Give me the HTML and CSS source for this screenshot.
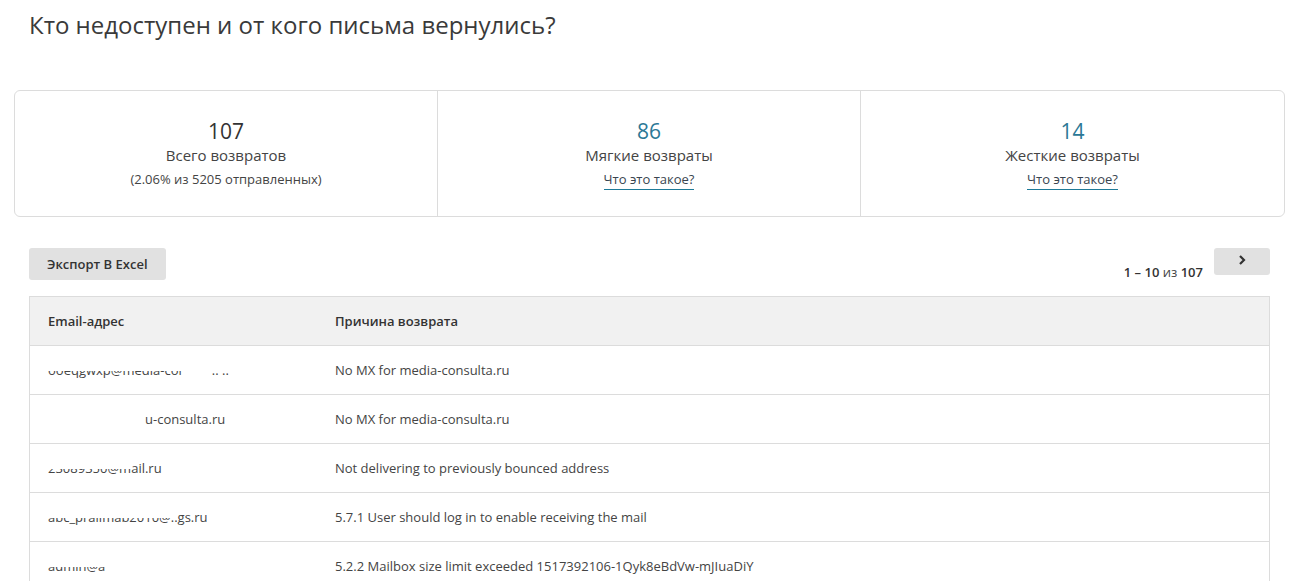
FILE: index.html
```html
<!DOCTYPE html>
<html lang="ru">
<head>
<meta charset="utf-8">
<title>Возвраты</title>
<link rel="stylesheet" href="styles.css">
</head>
<body>
<h1 class="title">Кто недоступен и от кого письма вернулись?</h1>

<div class="stats">
  <div class="stat">
    <div class="stat-num">107</div>
    <div class="stat-label">Всего возвратов</div>
    <div class="stat-sub">(2.06% из 5205 отправленных)</div>
  </div>
  <div class="stat">
    <div class="stat-num teal">86</div>
    <div class="stat-label">Мягкие возвраты</div>
    <div class="stat-sub"><a class="stat-link" href="#">Что это такое?</a></div>
  </div>
  <div class="stat">
    <div class="stat-num teal">14</div>
    <div class="stat-label">Жесткие возвраты</div>
    <div class="stat-sub"><a class="stat-link" href="#">Что это такое?</a></div>
  </div>
</div>

<div class="toolbar">
  <button class="btn">Экспорт В Excel</button>
  <div class="pager">
    <span class="pager-info"><b>1 – 10</b> из <b>107</b></span>
    <button class="btn btn-next"><svg width="10" height="12" viewBox="0 0 10 12"><path d="M3 2 L7 6 L3 10" fill="none" stroke="#333" stroke-width="2.2"/></svg></button>
  </div>
</div>

<table class="tbl">
  <thead>
    <tr><th class="c1">Email-адрес</th><th>Причина возврата</th></tr>
  </thead>
  <tbody>
    <tr><td class="c1"><span class="cut">ooeqgwxp@media-cor</span><span class="gap g1"></span><span class="cut">:: ..</span></td><td>No MX for media-consulta.ru</td></tr>
    <tr><td class="c1"><span class="gap g2"></span><span class="frag">u-consulta.ru</span></td><td>No MX for media-consulta.ru</td></tr>
    <tr><td class="c1"><span class="cut">23089350@m</span>ail.ru</td><td>Not delivering to previously bounced address</td></tr>
    <tr><td class="c1"><span class="cut">abc_prallmab2010@..</span>gs.ru</td><td>5.7.1 User should log in to enable receiving the mail</td></tr>
    <tr><td class="c1"><span class="cut">admin@a</span><span class="gap g3"></span><span class="cut">'</span></td><td>5.2.2 Mailbox size limit exceeded 1517392106-1Qyk8eBdVw-mJIuaDiY</td></tr>
  </tbody>
</table>
</body>
</html>
```

FILE: styles.css
```css
html, body {
  margin: 0;
  padding: 0;
  background: #fff;
}
body {
  font-family: "Open Sans", "Liberation Sans", sans-serif;
  color: #444;
  width: 1297px;
}
.title {
  margin: 0;
  padding: 9px 0 0 29px;
  font-size: 24px;
  line-height: 32px;
  font-weight: 400;
  color: #3a3a3a;
  height: 82px;
  box-sizing: border-box;
}
.stats {
  margin: 8px 12px 0 14px;
  border: 1px solid #dcdcdc;
  border-radius: 6px;
  display: grid;
  grid-template-columns: 422px 423px 1fr;
  height: 127px;
  box-sizing: border-box;
}
.stat {
  text-align: center;
  padding-top: 26px;
  border-left: 1px solid #dcdcdc;
}
.stat:first-child {
  border-left: none;
}
.stat-num {
  font-size: 21px;
  line-height: 28px;
  color: #333;
}
.stat-num.teal {
  color: #2b7896;
}
.stat-label {
  font-size: 15px;
  line-height: 20px;
  color: #444;
  margin-top: 0;
}
.stat-sub {
  font-size: 13px;
  line-height: 20px;
  color: #444;
  margin-top: 4px;
}
.stat-link {
  color: #3a4550;
  text-decoration: none;
  border-bottom: 1px solid #1e7a98;
  padding-bottom: 1px;
}
.toolbar {
  display: flex;
  justify-content: space-between;
  align-items: flex-start;
  margin: 31px 27px 0 29px;
  height: 48px;
}
.btn {
  border: none;
  background: #e1e1e1;
  border-radius: 3px;
  font-family: "Open Sans", "Liberation Sans", sans-serif;
  font-weight: 600;
  font-size: 13px;
  color: #333;
  height: 32px;
  padding: 0 18px;
  cursor: pointer;
}
.pager {
  display: flex;
  align-items: flex-start;
  gap: 11px;
}
.pager-info {
  font-size: 13px;
  color: #444;
  padding-top: 15px;
  line-height: 18px;
}
.pager-info b {
  font-weight: 600;
  color: #333;
}
.btn-next {
  width: 56px;
  height: 27px;
  padding: 0;
  display: flex;
  align-items: center;
  justify-content: center;
  padding-bottom: 4px;
}
.tbl {
  margin: 0 27px 0 29px;
  width: 1241px;
  border-collapse: collapse;
  border: 1px solid #dcdcdc;
  font-size: 13px;
}
.tbl th {
  background: #f1f1f1;
  font-weight: 600;
  color: #333;
  text-align: left;
  height: 48px;
  padding: 0 18px;
  border-bottom: 1px solid #dcdcdc;
}
.tbl td {
  height: 48px;
  padding: 0 18px;
  border-bottom: 1px solid #dcdcdc;
  color: #444;
  white-space: nowrap;
}
.tbl .c1 {
  width: 251px;
}
.cut {
  display: inline-block;
  clip-path: inset(55% 0 0 0);
}
.gap {
  display: inline-block;
}
.g1 { width: 28px; }
.g2 { width: 97px; }
.g3 { width: 40px; }
```
